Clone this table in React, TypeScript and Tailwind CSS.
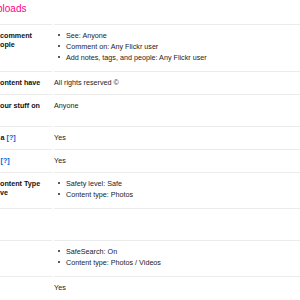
import React from "react";

type Row = { left: React.ReactNode[]; right: React.ReactNode };

const Q = () => <span className="text-[#0063dc]">[?]</span>;

const Bullets = ({ items }: { items: string[] }) => (
  <ul className="flex flex-col">
    {items.map((t) => (
      <li key={t} className="flex items-center mb-[2px] leading-[9px] whitespace-nowrap">
        <span className="w-[2.5px] h-[2.5px] rounded-full bg-[#222] ml-[3.5px] mr-[6px] shrink-0" />
        <span>{t}</span>
      </li>
    ))}
  </ul>
);

const rows: Row[] = [
  {
    left: ["comment", "ople"],
    right: <Bullets items={["See: Anyone", "Comment on: Any Flickr user", "Add notes, tags, and people: Any Flickr user"]} />,
  },
  { left: ["ontent have"], right: <span>All rights reserved ©</span> },
  { left: ["our stuff on", "\u00a0"], right: <span>Anyone</span> },
  { left: [<span key="a" className="ml-[0.5px]">a <Q /></span>], right: <span>Yes</span> },
  { left: [<span key="b" className="ml-[0.5px]"><Q /></span>], right: <span>Yes</span> },
  {
    left: ["ontent Type", "ve"],
    right: <Bullets items={["Safety level: Safe", "Content type: Photos"]} />,
  },
  { left: ["\u00a0", "\u00a0"], right: <span /> },
  {
    left: ["\u00a0"],
    right: <Bullets items={["SafeSearch: On", "Content type: Photos / Videos"]} />,
  },
  { left: ["\u00a0"], right: <span>Yes</span> },
];

export default function App() {
  return (
    <div
      className="w-[300px] h-[300px] overflow-hidden bg-white text-[#222]"
      style={{ fontFamily: '"Liberation Sans", Arial, sans-serif' }}
    >
      <div className="pt-[3px] pb-[9px] leading-[12px] text-[10px] text-[#ff0084] whitespace-nowrap ml-[-3px]">
        ploads
      </div>
      <div className="grid grid-cols-[52px_1fr] gap-x-[2px] text-[7.2px]">
        {rows.map((r, i) => (
          <React.Fragment key={i}>
            <div className="border-t border-[#ececec] pt-[5.5px] pb-[7.5px] font-bold text-[#111] leading-[9px] whitespace-nowrap overflow-hidden">
              {r.left.map((l, j) => (
                <div key={j}>{l}</div>
              ))}
            </div>
            <div className="border-t border-[#ececec] pt-[5.5px] pb-[7.5px] leading-[9px] text-[#222]">
              {r.right}
            </div>
          </React.Fragment>
        ))}
      </div>
    </div>
  );
}
